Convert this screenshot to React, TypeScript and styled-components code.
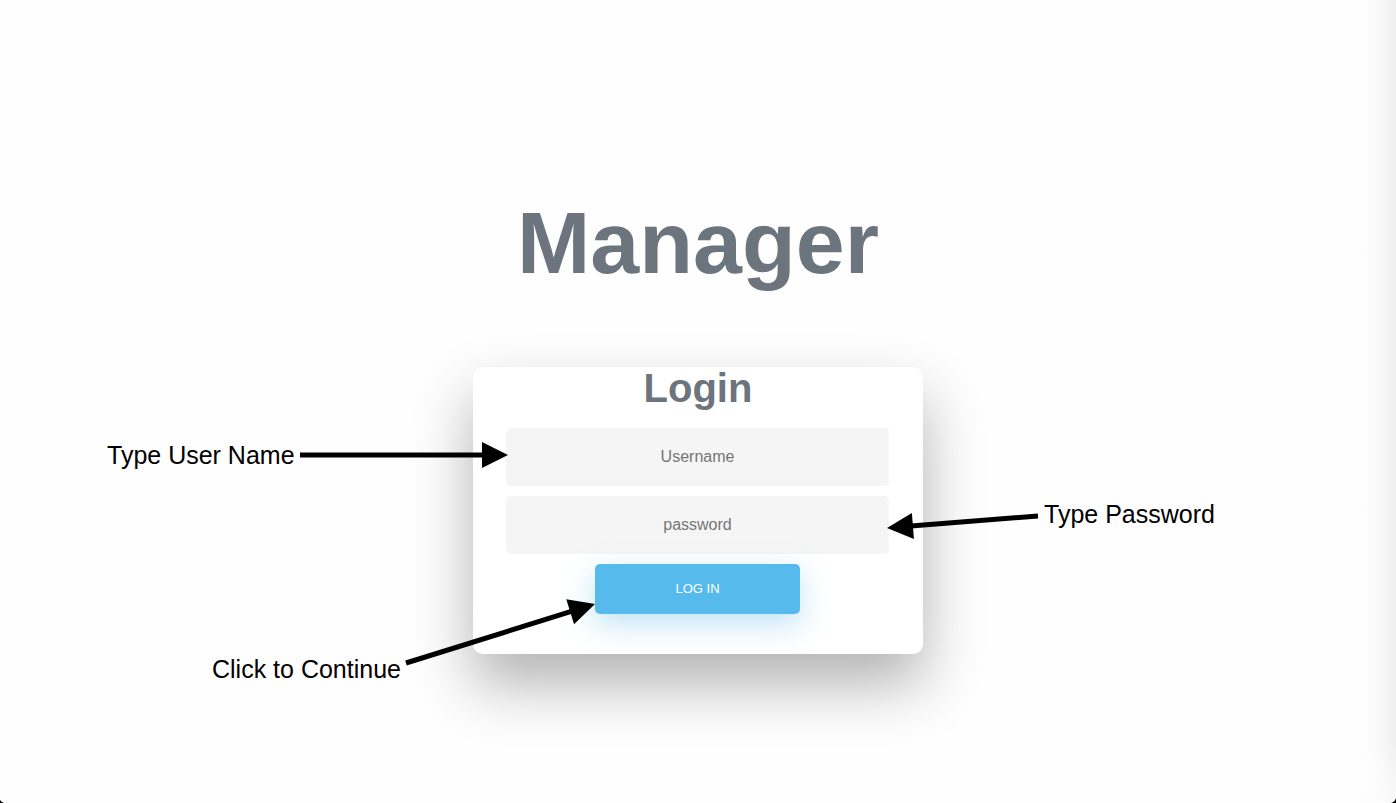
import React from "react";
import styled, { createGlobalStyle } from "styled-components";

const GlobalStyle = createGlobalStyle`
  *, *::before, *::after { box-sizing: border-box; }
  body {
    margin: 0;
    background: #fefefe;
    font-family: "Liberation Sans", Arial, sans-serif;
  }
`;

const Page = styled.main`
  position: relative;
  min-height: 100vh;
  padding-top: 190px;
  display: flex;
  flex-direction: column;
  align-items: center;
  overflow: hidden;
`;

const EdgeShade = styled.div`
  position: absolute;
  top: 0;
  right: 0;
  bottom: 0;
  width: 40px;
  background: linear-gradient(to right, #fefefe 0%, #fcfcfc 40%, #f7f7f7 70%, #efefef 100%);
  mask-image: linear-gradient(to top, rgba(0, 0, 0, 0.3), #000 60px);
`;

const Corner = styled.svg<{ $side: "left" | "right" }>`
  position: absolute;
  bottom: 0;
  ${(p) => p.$side}: 0;
`;

const PageTitle = styled.h1`
  margin: 0 0 71px;
  color: #6c757d;
  font-size: 88px;
  line-height: 106px;
  font-weight: 700;
`;

const CardArea = styled.div`
  position: relative;
  width: 100%;
  max-width: 450px;
`;

const Card = styled.section`
  border-radius: 10px;
  background: #fff;
  box-shadow: 0 30px 60px 0 rgba(0, 0, 0, 0.3);
`;

const CardTitle = styled.h2`
  margin: 0;
  color: #6c757d;
  font-size: 40px;
  line-height: 42px;
  font-weight: 700;
  text-align: center;
`;

const LoginForm = styled.form`
  display: flex;
  flex-direction: column;
  align-items: center;
  gap: 10px;
  padding: 19px 34px 40px 33px;
`;

const Field = styled.input`
  width: 100%;
  height: 58px;
  padding: 0 32px;
  border: 0;
  border-radius: 5px;
  background: #f5f5f5;
  color: #0d0d0d;
  font-family: inherit;
  font-size: 16px;
  text-align: center;

  &::placeholder {
    color: #757575;
    opacity: 1;
  }
`;

const SubmitButton = styled.button`
  height: 50px;
  padding: 0 80px 2px;
  border: 0;
  border-radius: 5px;
  background: #56baed;
  box-shadow: 0 10px 30px 0 rgba(95, 186, 233, 0.4);
  color: #fff;
  font-family: inherit;
  font-size: 13px;
  text-transform: uppercase;
  white-space: nowrap;
  cursor: pointer;
`;

const Note = styled.p<{ $x: number; $y: number }>`
  position: absolute;
  left: ${(p) => p.$x}px;
  top: ${(p) => p.$y}px;
  margin: 0;
  color: #000;
  font-size: 25px;
  line-height: 28px;
  white-space: nowrap;
`;

const Arrows = styled.svg`
  position: absolute;
  top: 0;
  left: 0;
  overflow: visible;
  pointer-events: none;
`;

const notes = [
  { text: "Type User Name", x: -366, y: 74 },
  { text: "Type Password", x: 571, y: 133 },
  { text: "Click to Continue", x: -261, y: 288 },
];

const arrows = [
  { x1: -173, y1: 88, x2: 35, y2: 88 },
  { x1: 565, y1: 149, x2: 414, y2: 161 },
  { x1: -67, y1: 296, x2: 122, y2: 237 },
];

const HEAD_LENGTH = 26;
const HEAD_HALF = 13;

/* A shaft with a solid triangular head whose tip lies on (x2, y2). */
function Arrow({ x1, y1, x2, y2 }: { x1: number; y1: number; x2: number; y2: number }) {
  const length = Math.hypot(x2 - x1, y2 - y1);
  const angle = (Math.atan2(y2 - y1, x2 - x1) * 180) / Math.PI;
  const base = length - HEAD_LENGTH;
  return (
    <g transform={`translate(${x1} ${y1}) rotate(${angle})`}>
      <path d={`M0 -2.5 H${base + 2} V2.5 H0 Z`} />
      <path d={`M${base} ${-HEAD_HALF} L${length} 0 L${base} ${HEAD_HALF} Z`} />
    </g>
  );
}

export default function App() {
  return (
    <>
      <GlobalStyle />
      <Page>
        <EdgeShade />
        <PageTitle>Manager</PageTitle>
        <CardArea>
          <Card aria-labelledby="login-title">
            <CardTitle id="login-title">Login</CardTitle>
            <LoginForm onSubmit={(e) => e.preventDefault()}>
              <Field type="text" name="username" placeholder="Username" aria-label="Username" />
              <Field type="password" name="password" placeholder="password" aria-label="password" />
              <SubmitButton type="submit">Log In</SubmitButton>
            </LoginForm>
          </Card>
          {notes.map((n) => (
            <Note key={n.text} $x={n.x} $y={n.y}>
              {n.text}
            </Note>
          ))}
          <Arrows width="450" height="287" aria-hidden="true">
            {arrows.map((a) => (
              <Arrow key={a.x1} {...a} />
            ))}
          </Arrows>
        </CardArea>
        <Corner $side="left" width="4" height="3" aria-hidden="true">
          <path d="M0 0 Q1 2 4 3 H0 Z" />
        </Corner>
        <Corner $side="right" width="5" height="5" aria-hidden="true">
          <path d="M5 0 Q4 4 0 5 H5 Z" />
        </Corner>
      </Page>
    </>
  );
}
